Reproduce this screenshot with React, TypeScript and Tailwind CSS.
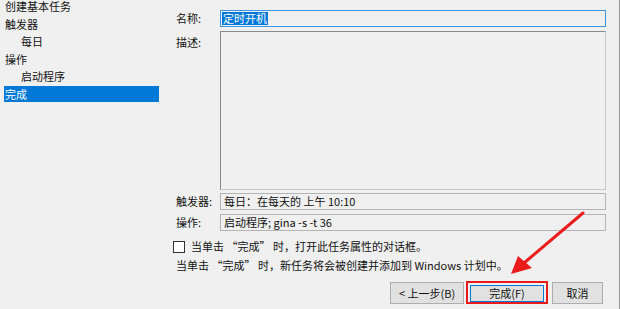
import React from 'react';

const font = { fontFamily: '"Noto Sans CJK SC", "Noto Sans", sans-serif' };

function NavItem({ label, indent, active }: { label: string; indent?: boolean; active?: boolean }) {
  return (
    <div className="h-[17.5px] flex items-center">
      <div
        className={
          'h-[16px] w-full flex items-center leading-none ' +
          (indent ? 'pl-[17px] ' : 'pl-[1px] ') +
          (active ? 'bg-[#0078d7] text-white' : 'text-[#111]')
        }
      >
        {label}
      </div>
    </div>
  );
}

function Field({ label, children, className }: { label: string; children: React.ReactNode; className?: string }) {
  return (
    <div className="flex items-center h-[17px]">
      <div className="w-[44px] shrink-0">{label}</div>
      <div className={'flex-1 h-full flex items-center px-[3px] ' + (className ?? '')}>{children}</div>
    </div>
  );
}

export default function App() {
  return (
    <div
      className="relative w-[620px] h-[309px] overflow-hidden bg-[#f0f0f0] text-[11px] text-[#111] flex border-r border-[#9a9a9a]"
      style={font}
    >
      {/* left steps */}
      <div className="w-[160px] shrink-0 pl-[4px] pr-[1px] mt-[-2px]">
        <NavItem label="创建基本任务" />
        <NavItem label="触发器" />
        <NavItem label="每日" indent />
        <NavItem label="操作" />
        <NavItem label="启动程序" indent />
        <NavItem label="完成" active />
      </div>

      {/* main */}
      <div className="flex-1 flex flex-col pt-[10px] pl-[16px] pr-[13px]">
        <Field label="名称:" className="border border-[#3c94e4] bg-[#f0f0f0]">
          <span className="bg-[#0078d7] text-white leading-[13px] px-[1px] -ml-[2px]">定时开机</span>
        </Field>

        <div className="flex mt-[4px] h-[159px]">
          <div className="w-[44px] shrink-0 pt-[3px]">描述:</div>
          <div className="flex-1 border border-[#8a8a8a] border-r-[#c8c8c8] border-b-[#c8c8c8] bg-[#f0f0f0]" />
        </div>

        <div className="mt-[3px]">
          <Field label="触发器:" className="border border-[#b4b4b4]">
            每日：在每天的 上午 10:10
          </Field>
        </div>
        <div className="mt-[4px]">
          <Field label="操作:" className="border border-[#b4b4b4]">
            启动程序; gina -s -t 36
          </Field>
        </div>

        <div className="flex items-center mt-[9px] -ml-[3px] h-[13px]">
          <div className="w-[12px] h-[12px] border border-[#333] bg-white shrink-0" />
          <span className="ml-[6px]">当单击 “完成” 时，打开此任务属性的对话框。</span>
        </div>
        <div className="mt-[4px] leading-[17px]">当单击 “完成” 时，新任务将会被创建并添加到 Windows 计划中。</div>

        <div className="flex mt-[8px] pl-[214px] gap-[2px]">
          <button className="w-[74px] h-[22px] bg-[#e1e1e1] border border-[#adadad] text-[11px] leading-none">
            &lt; 上一步(B)
          </button>
          <div className="w-[82px] h-[23px] -mt-[1px] border-2 border-[#e81a1a] p-[2px] pb-0">
            <button className="w-full h-full bg-[#e1e1e1] border border-[#0078d7] text-[11px] leading-none">
              完成(F)
            </button>
          </div>
          <button className="ml-[2px] w-[51px] h-[22px] bg-[#e1e1e1] border border-[#adadad] text-[11px] leading-none">
            取消
          </button>
        </div>
      </div>

      {/* red annotation arrow */}
      <svg className="absolute inset-0 pointer-events-none" width="620" height="309" viewBox="0 0 620 309">
        <line x1="583" y1="213" x2="524" y2="263" stroke="#ec1c1c" strokeWidth="3" strokeLinecap="round" />
        <polygon points="511,274 518,256 532,268" fill="#ec1c1c" />
      </svg>
    </div>
  );
}
